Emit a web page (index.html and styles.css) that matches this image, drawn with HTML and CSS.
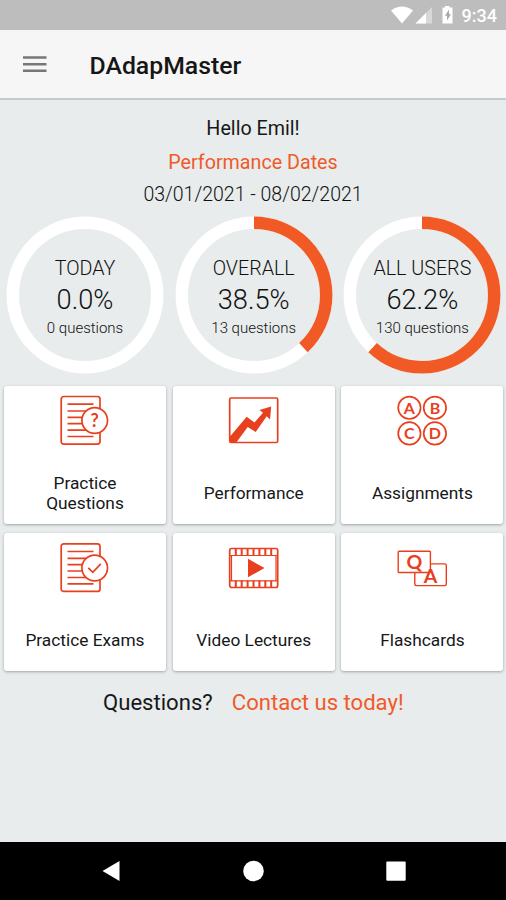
FILE: index.html
```html
<!DOCTYPE html>
<html lang="en">
<head>
<meta charset="utf-8">
<title>DAdapMaster</title>
<link rel="stylesheet" href="styles.css">
</head>
<body>
<div class="status">
  <svg class="status-icons" width="66" height="30" viewBox="0 0 66 30">
    <path d="M0 10.500Q11 2.500 22 10.500L11 23.500Z" fill="#fff"/>
    <path d="M24.500 23.500L41 7V23.500Z" fill="#d8d8d8"/>
    <path d="M24.500 23.500L35 13V23.500Z" fill="#fff"/>
    <path d="M51.500 7.500H54V6H58.500V7.500H61.500V23.500H51.500Z" fill="#fff"/>
    <path d="M58 9.500L53.900 15.800H56V20.500L60 14.300H58Z" fill="#aaa"/>
  </svg>
  <span class="clock">9:34</span>
</div>
<header class="bar">
  <svg class="menu" width="24" height="18" viewBox="0 0 24 18"><path d="M0 2.500H23.500M0 9.300H23.500M0 15.800H23.500" stroke="#777" stroke-width="2.400"/></svg>
  <h1 class="title">DAdapMaster</h1>
</header>
<main class="main">
  <div class="hello"><span>Hello Emil!</span></div>
  <div class="label"><span>Performance Dates</span></div>
  <div class="dates"><span>03/01/2021 - 08/02/2021</span></div>
  <section class="rings">
    <div class="ring">
      <svg class="dial" viewBox="0 0 158 158"><circle class="track" cx="79" cy="79" r="72.200"/></svg>
      <div class="ring-text"><span class="name">TODAY</span><span class="pct">0.0%</span><span class="count">0 questions</span></div>
    </div>
    <div class="ring">
      <svg class="dial" viewBox="0 0 158 158"><circle class="track" cx="79" cy="79" r="72.200"/><circle class="arc" cx="79" cy="79" r="72.200" pathLength="100" stroke-dasharray="38 100" transform="rotate(-90 79 79)"/></svg>
      <div class="ring-text"><span class="name">OVERALL</span><span class="pct">38.5%</span><span class="count">13 questions</span></div>
    </div>
    <div class="ring">
      <svg class="dial" viewBox="0 0 158 158"><circle class="track" cx="79" cy="79" r="72.200"/><circle class="arc" cx="79" cy="79" r="72.200" pathLength="100" stroke-dasharray="62 100" transform="rotate(-90 79 79)"/></svg>
      <div class="ring-text"><span class="name">ALL USERS</span><span class="pct">62.2%</span><span class="count">130 questions</span></div>
    </div>
  </section>
  <section class="cards">
    <div class="card">
      <svg class="icon" viewBox="0 0 52 52">
        <rect x="2.200" y="2.500" width="38.800" height="47.600" rx="2.500"/>
        <path d="M8.500 10.200H34.500M8.500 17H28M8.500 23.400H24M8.500 29.700H24M8.500 36.200H28M8.500 42.500H34.500"/>
        <circle class="paper" cx="35.700" cy="26.500" r="12.800"/>
        <text class="glyph question" x="35.700" y="33">?</text>
      </svg>
      <div class="caption two"><span>Practice<br>Questions</span></div>
    </div>
    <div class="card">
      <svg class="icon" viewBox="0 0 52 52">
        <rect x="1.700" y="4" width="48" height="44.500" rx="1.500"/>
        <path class="solid" d="M2 42.500L18.700 22.700L26.500 28.500L35 18.800L31.500 16L43.200 12.500L42 25.500L38.700 22.300L27.700 38L19.700 33L8.300 48.500H2Z"/>
      </svg>
      <div class="caption"><span>Performance</span></div>
    </div>
    <div class="card">
      <svg class="icon" viewBox="0 0 52 52">
        <circle cx="13.400" cy="13.800" r="11.200"/><circle cx="38.900" cy="13.800" r="11.200"/>
        <circle cx="13.400" cy="39.400" r="11.200"/><circle cx="38.900" cy="39.400" r="11.200"/>
        <text class="glyph" x="13.400" y="19.500">A</text><text class="glyph" x="38.900" y="19.500">B</text>
        <text class="glyph" x="13.400" y="45">C</text><text class="glyph" x="38.900" y="45">D</text>
      </svg>
      <div class="caption"><span>Assignments</span></div>
    </div>
    <div class="card">
      <svg class="icon" viewBox="0 0 52 52">
        <rect x="2.200" y="2.800" width="38.800" height="47.600" rx="2.500"/>
        <path d="M8.500 10.500H34.500M8.500 17.300H28M8.500 23.700H24M8.500 30H24M8.500 36.500H28M8.500 42.800H34.500"/>
        <circle class="paper" cx="35.700" cy="27" r="12.800"/>
        <path d="M29.300 26.800L33.800 31.300L41.800 22.800"/>
      </svg>
      <div class="caption"><span>Practice Exams</span></div>
    </div>
    <div class="card">
      <svg class="icon" viewBox="0 0 52 52">
        <rect x="1.700" y="7.500" width="48" height="39" rx="2"/>
        <path d="M2 14.500H49.500M2 39.800H49.500M3.500 14V39.500M48 14V39.500" stroke-width="1.200"/>
        <path d="M7.800 7.500V14M13.700 7.500V14M19.600 7.500V14M25.500 7.500V14M31.400 7.500V14M37.300 7.500V14M43.200 7.500V14M7.800 39.500V46M13.700 39.500V46M19.600 39.500V46M25.500 39.500V46M31.400 39.500V46M37.300 39.500V46M43.200 39.500V46" stroke-width="2"/>
        <path class="solid" d="M20 17.800L36.500 27L20 36.300Z"/>
      </svg>
      <div class="caption"><span>Video Lectures</span></div>
    </div>
    <div class="card">
      <svg class="icon thin" viewBox="0 0 52 52">
        <rect x="18.800" y="22.900" width="31.500" height="21.700" rx="1.500"/>
        <rect class="paper" x="2.200" y="10.200" width="32.200" height="21.300" rx=".8"/>
        <text class="glyph large" x="18.300" y="27.500">Q</text>
        <text class="glyph large" x="34.500" y="42.300">A</text>
      </svg>
      <div class="caption"><span>Flashcards</span></div>
    </div>
  </section>
  <div class="contact"><span class="ask">Questions?</span><span class="link">Contact us today!</span></div>
</main>
<nav class="nav">
  <svg width="20" height="22" viewBox="0 0 20 22"><path d="M1.500 11L18.500 1V21Z"/></svg>
  <svg width="22" height="22" viewBox="0 0 22 22"><circle cx="10.500" cy="11" r="10.300"/></svg>
  <svg width="20" height="22" viewBox="0 0 20 22"><rect x=".3" y="1.500" width="19.400" height="19.200" rx="1"/></svg>
</nav>
</body>
</html>
```
FILE: styles.css
```css
* { box-sizing: border-box; }
body { margin: 0; width: 506px; height: 900px; display: flex; flex-direction: column; overflow: hidden; background: #e8ecec; font-family: Roboto, "Liberation Sans", sans-serif; color: #161819; }
.status { height: 30px; background: #bdbdbd; display: flex; align-items: center; justify-content: flex-end; padding-right: 9px; color: #fff; }
.status-icons { margin-right: 5px; }
.clock { font-size: 18px; line-height: 30px; font-weight: 500; padding-top: 2px; }
.bar { height: 70px; background: #f6f6f6; border-bottom: 2px solid #c5cbcd; display: flex; align-items: center; padding-left: 23px; }
.menu { margin-right: 42.500px; }
.title { margin: 3px 0 0; font-size: 24.800px; line-height: 30px; font-weight: 500; color: #161616; }
.main { flex: 1; display: flex; flex-direction: column; text-align: center; }
.hello { margin-top: 16px; font-size: 19.700px; line-height: 26px; }
.label { margin-top: 8px; font-size: 19.700px; line-height: 26px; color: #f05a28; }
.dates { margin-top: 6px; font-size: 19.500px; line-height: 26px; font-weight: 300; color: #111; }
.rings { display: grid; grid-template-columns: repeat(3, 158px); column-gap: 10.700px; padding-left: 6px; margin-top: 8px; }
.ring { display: grid; height: 158px; }
.dial, .ring-text { grid-area: 1 / 1; }
.dial { width: 158px; height: 158px; fill: none; stroke-width: 12.500px; }
.track { stroke: #fff; }
.arc { stroke: #f15a24; }
.ring-text { display: flex; flex-direction: column; align-items: center; padding-top: 40px; font-weight: 300; color: #111; }
.name { font-size: 19.700px; line-height: 26px; }
.pct { font-size: 27.200px; line-height: 36px; }
.count { font-size: 15px; line-height: 20px; }
.cards { display: grid; grid-template-columns: repeat(3, 162px); column-gap: 6.700px; row-gap: 9px; padding-left: 4px; margin-top: 12px; }
.card { height: 138px; background: #fff; border-radius: 3px; box-shadow: 0 1px 3px #9da5a8; display: flex; flex-direction: column; align-items: center; }
.icon { width: 52px; height: 52px; margin-top: 8px; fill: none; stroke: #e8401f; stroke-width: 1.700px; }
.thin { stroke-width: 1.400px; }
.paper { fill: #fff; }
.solid { fill: #e8401f; stroke: none; }
.glyph { fill: #e8401f; stroke: none; font: 700 16px Lato, sans-serif; text-anchor: middle; }
.question { font-size: 18px; }
.large { font-size: 19.500px; }
.caption { font-size: 17.300px; line-height: 20px; margin-top: 37px; }
.two { margin-top: 27px; }
.contact { margin-top: 17px; display: flex; padding-left: 103px; gap: 19px; font-size: 22.100px; line-height: 28px; white-space: nowrap; }
.link { color: #f05a28; }
.nav { height: 58px; background: #000; display: flex; align-items: center; justify-content: space-between; padding: 0 100px 0 101px; fill: #fff; }
```
